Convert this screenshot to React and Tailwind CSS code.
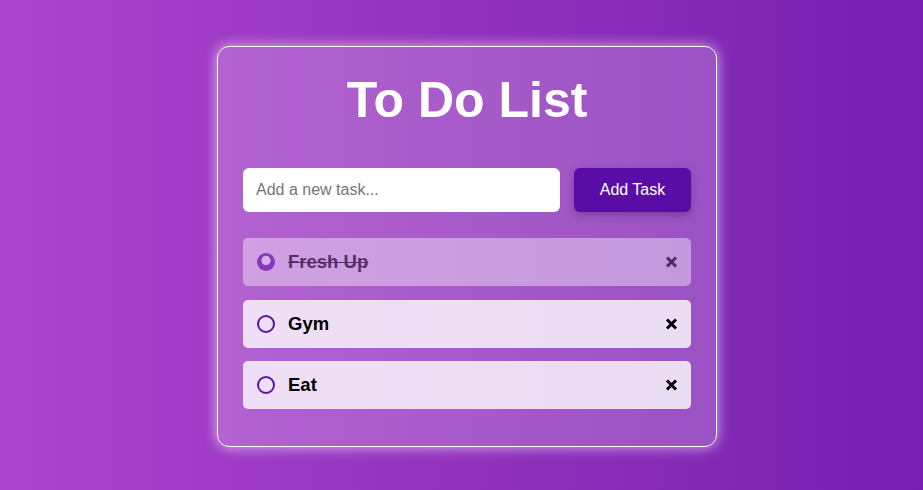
import React from "react";

function Unchecked() {
  return (
    <svg width="18" height="18" viewBox="0 0 18 18" className="shrink-0">
      <circle cx="9" cy="9" r="8" fill="none" stroke="#5b12a8" strokeWidth="2" />
    </svg>
  );
}

function Checked() {
  return (
    <svg width="18" height="18" viewBox="0 0 18 18" className="shrink-0">
      <circle cx="9" cy="9" r="9" fill="#5b12a8" />
      <circle cx="9" cy="7.4" r="4.6" fill="#ffffff" />
    </svg>
  );
}

function XIcon({ color }) {
  return (
    <svg width="13" height="12" viewBox="0 0 13 12" className="shrink-0">
      <path d="M2 1.5 L11 10.5 M11 1.5 L2 10.5" stroke={color} strokeWidth="3" strokeLinecap="butt" />
    </svg>
  );
}

function Item({ text, done }) {
  return (
    <div
      className={
        "flex h-12 items-center rounded-[5px] bg-white/80 pl-[14px] pr-[13px] " +
        (done ? "opacity-50" : "")
      }
    >
      {done ? <Checked /> : <Unchecked />}
      <span
        className={
          "ml-[13px] flex-1 text-[18.5px] font-bold text-black " +
          (done ? "line-through decoration-1" : "")
        }
      >
        {text}
      </span>
      <XIcon color="#000000" />
    </div>
  );
}

export default function App() {
  return (
    <div
      className="min-h-screen w-full bg-[linear-gradient(90deg,#ab45d0_0%,#9533be_45%,#7520b0_100%)] pl-[217px] pt-[46px]"
      style={{ fontFamily: '"Liberation Sans", Arial, sans-serif', height: 490 }}
    >
      <div className="w-[500px] rounded-[12px] border border-white bg-white/20 px-[25px] pb-[37px] pt-[28px] shadow-[0_0_14px_rgba(255,255,255,0.65)]">
        <h1 className="text-center text-[50px] font-bold leading-none text-white">To Do List</h1>
        <div className="mt-[43px] flex gap-[14px]">
          <input
            className="h-[44px] min-w-0 flex-1 rounded-[6px] bg-white pl-[13px] text-[16px] text-black outline-none placeholder:text-[#757575]"
            placeholder="Add a new task..."
            style={{ fontFamily: '"Liberation Sans", Arial, sans-serif' }}
          />
          <button
            className="h-[44px] w-[117px] rounded-[6px] bg-[#5a0ca6] text-[16px] text-white shadow-[0_3px_8px_rgba(0,0,0,0.25)]"
            style={{ fontFamily: '"Liberation Sans", Arial, sans-serif' }}
          >
            Add Task
          </button>
        </div>
        <div className="mt-[26px] flex flex-col gap-[13.5px]">
          <Item text="Fresh Up" done />
          <Item text="Gym" />
          <Item text="Eat" />
        </div>
      </div>
    </div>
  );
}
